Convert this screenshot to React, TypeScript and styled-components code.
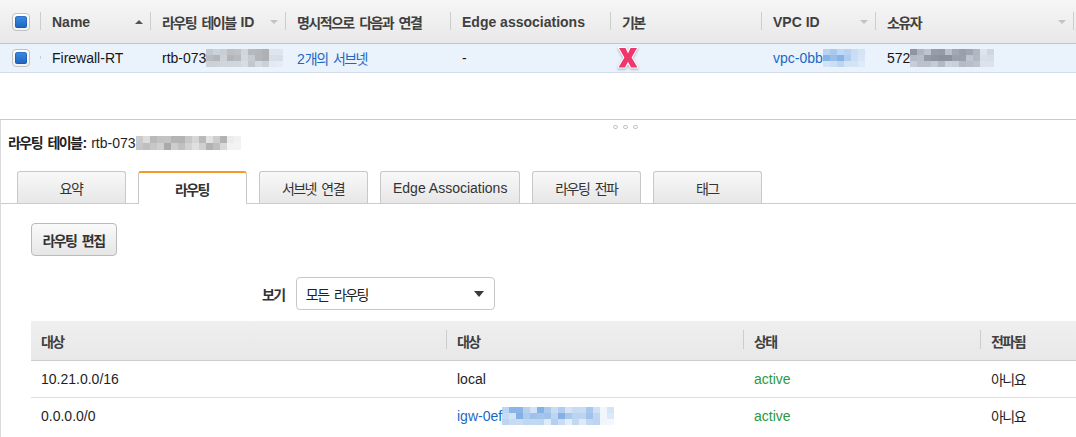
import React from "react";
import styled, { createGlobalStyle } from "styled-components";

const GlobalStyle = createGlobalStyle`
  html, body {
    margin: 0;
    padding: 0;
    background: #fff;
  }
  body {
    font-family: "Liberation Sans", "Noto Sans CJK KR", sans-serif;
    font-size: 14px;
    color: #1e1e1e;
    width: 1076px;
    height: 437px;
    overflow: hidden;
  }
  * {
    box-sizing: border-box;
  }
`;

// hangul in the source is narrower than Noto's full-width glyphs
const Ko = styled.span`
  letter-spacing: -0.11em;
  word-spacing: 0.22em;
  margin-right: 0.08em;
`;

const TOP_COLS = "41px 110px 135px 165px 160px 151px 114px 198px 1fr";

const TopTable = styled.div`
  height: 120px;
  border-bottom: 1px solid #cacaca;
  overflow: hidden;
`;

const HeadRow = styled.div`
  display: grid;
  grid-template-columns: ${TOP_COLS};
  height: 44px;
  background: linear-gradient(#f6f6f6, #e8e8e8);
  border-bottom: 1px solid #c6c6c6;
`;

const HeadCell = styled.div`
  position: relative;
  display: flex;
  align-items: center;
  padding: 0 8px 0 11px;
  font-weight: bold;
  color: #404040;
  white-space: pre;
  &::after {
    content: "";
    position: absolute;
    right: 0;
    top: 12px;
    bottom: 13px;
    width: 1px;
    background: #cdcdcd;
  }
`;

const CheckCell = styled.div`
  position: relative;
  display: flex;
  align-items: center;
  padding-left: 12px;
  &::after {
    content: "";
    position: absolute;
    right: 0;
    top: 12px;
    bottom: 13px;
    width: 1px;
    background: #cdcdcd;
  }
`;

const SortArrow = styled.span<{ $up?: boolean }>`
  margin-left: auto;
  width: 0;
  height: 0;
  border-left: 4px solid transparent;
  border-right: 4px solid transparent;
  ${(p) =>
    p.$up
      ? "border-bottom: 4px solid #555;"
      : "border-top: 4px solid #c2c2c2;"}
`;

const Checkbox = styled.span`
  display: flex;
  align-items: center;
  justify-content: center;
  width: 18px;
  height: 18px;
  border: 1px solid #c2c2c2;
  border-radius: 4px;
  background: linear-gradient(#ffffff, #f1f1f1);
  &::before {
    content: "";
    width: 12px;
    height: 12px;
    border-radius: 2.5px;
    background: linear-gradient(#3d8ce2, #1f62c0);
    box-shadow: inset 0 0 0 1px rgba(20, 70, 150, 0.35);
  }
`;

const DataRow = styled.div`
  display: grid;
  grid-template-columns: ${TOP_COLS};
  height: 29px;
  background: #eaf2fc;
  border-bottom: 1px solid #d3dce8;
`;

const DataCell = styled.div`
  display: flex;
  align-items: center;
  padding-left: 11px;
  white-space: pre;
  overflow: hidden;
  color: #161616;
`;

const LinkText = styled.span`
  color: #1b69c4;
`;

const XSvg = styled.svg`
  margin-left: -6px;
  filter: drop-shadow(0 1px 1px rgba(0, 0, 0, 0.3));
`;

const PixelGrid = styled.span<{ $cols: number; $w: number; $h: number }>`
  display: inline-grid;
  grid-template-columns: repeat(${(p) => p.$cols}, ${(p) => p.$w}px);
  grid-auto-rows: ${(p) => p.$h}px;
  vertical-align: middle;
`;

const Pixel = styled.span``;

type Tone = "grey" | "dark" | "blue";
const TONES: Record<Tone, [number, number, number]> = {
  grey: [140, 140, 140],
  dark: [105, 112, 124],
  blue: [90, 150, 220],
};

function Redacted({
  cols,
  rows,
  tone,
  seed,
  w = 7,
  h = 6,
}: {
  cols: number;
  rows: number;
  tone: Tone;
  seed: number;
  w?: number;
  h?: number;
}) {
  const [r, g, b] = TONES[tone];
  const cells = [];
  for (let y = 0; y < rows; y++) {
    for (let x = 0; x < cols; x++) {
      const n = Math.sin((x + 1) * 12.9898 + (y + 1) * 78.233 + seed * 3.7) * 43758.5453;
      let a = 0.25 + 0.5 * (n - Math.floor(n));
      if (x >= cols - 2) a *= 0.35;
      if (y === rows - 1 && rows > 2) a *= 0.6;
      cells.push(
        <Pixel key={`${x}-${y}`} style={{ background: `rgba(${r},${g},${b},${a.toFixed(2)})` }} />
      );
    }
  }
  return (
    <PixelGrid $cols={cols} $w={w} $h={h}>
      {cells}
    </PixelGrid>
  );
}

const Detail = styled.div`
  height: 317px;
  border-left: 1px solid #d9d9d9;
`;

const Grip = styled.div`
  display: flex;
  gap: 5px;
  height: 14px;
  padding: 5px 0 0 612px;
`;

const GripDot = styled.span`
  width: 5px;
  height: 4px;
  border: 1px solid #c4c4c4;
  border-radius: 2px;
`;

const PanelTitle = styled.div`
  height: 18px;
  line-height: 18px;
  padding-left: 7px;
  display: flex;
  align-items: center;
  white-space: pre;
`;

const TitleLabel = styled.b`
  color: #222;
`;

const TabBar = styled.div`
  display: flex;
  align-items: flex-end;
  gap: 12px;
  height: 33px;
  margin-top: 19px;
  padding-left: 16px;
  border-bottom: 1px solid #cbcbcb;
`;

const Tab = styled.div<{ $active?: boolean }>`
  display: flex;
  align-items: center;
  justify-content: center;
  min-width: 109px;
  padding: 0 12px;
  border: 1px solid #c8c8c8;
  border-bottom: none;
  border-radius: 3px 3px 0 0;
  white-space: nowrap;
  color: #333;
  height: ${(p) => (p.$active ? "33px" : "32px")};
  margin-bottom: ${(p) => (p.$active ? "-1px" : "0")};
  background: ${(p) => (p.$active ? "#fff" : "linear-gradient(#f8f8f8, #e7e7e7)")};
  font-weight: ${(p) => (p.$active ? "bold" : "normal")};
  border-top: ${(p) => (p.$active ? "2px solid #f39a27" : "1px solid #c8c8c8")};
`;

const Body = styled.div`
  padding: 19px 0 0 30px;
`;

const EditButton = styled.button`
  display: flex;
  align-items: center;
  justify-content: center;
  width: 86px;
  height: 33px;
  padding: 0;
  border: 1px solid #bababa;
  border-radius: 4px;
  background: linear-gradient(#fafafa, #e6e6e6);
  font-family: inherit;
  font-size: 14px;
  font-weight: bold;
  color: #333;
`;

const FilterRow = styled.div`
  display: flex;
  align-items: center;
  gap: 10px;
  margin: 21px 0 0 231px;
`;

const FilterLabel = styled.b`
  color: #333;
`;

const SelectBox = styled.div`
  display: flex;
  align-items: center;
  width: 199px;
  height: 33px;
  padding: 0 10px 0 9px;
  border: 1px solid #c8c8c8;
  border-radius: 4px;
  background: #fff;
  color: #222;
`;

const Caret = styled.span`
  margin-left: auto;
  width: 0;
  height: 0;
  border-left: 5px solid transparent;
  border-right: 5px solid transparent;
  border-top: 6px solid #3a3a3a;
`;

const ROUTE_COLS = "415px 297px 237px 1fr";

const RouteTable = styled.div`
  margin-top: 11px;
`;

const RouteHead = styled.div`
  display: grid;
  grid-template-columns: ${ROUTE_COLS};
  height: 40px;
  background: linear-gradient(#efefef, #e8e8e8);
  border-bottom: 1px solid #cdcdcd;
`;

const RouteHeadCell = styled.div<{ $sep?: boolean }>`
  position: relative;
  display: flex;
  align-items: center;
  padding-left: ${(p) => (p.$sep ? "11px" : "10px")};
  font-weight: bold;
  color: #404040;
  &::before {
    content: "";
    display: ${(p) => (p.$sep ? "block" : "none")};
    position: absolute;
    left: 0;
    top: 9px;
    bottom: 11px;
    width: 1px;
    background: #cdcdcd;
  }
`;

const RouteRow = styled.div<{ $last?: boolean }>`
  display: grid;
  grid-template-columns: ${ROUTE_COLS};
  height: 37px;
  border-bottom: 1px solid ${(p) => (p.$last ? "transparent" : "#dedede")};
`;

const RouteCell = styled.div<{ $first?: boolean }>`
  display: flex;
  align-items: center;
  padding-left: ${(p) => (p.$first ? "10px" : "11px")};
  white-space: pre;
  overflow: hidden;
  color: #1e1e1e;
`;

const Status = styled.span`
  color: #2a9a3c;
`;

const TOP_HEADERS: { label: React.ReactNode; arrow?: "up" | "down" }[] = [
  { label: "Name", arrow: "up" },
  { label: <><Ko>라우팅 테이블</Ko> ID</>, arrow: "down" },
  { label: <Ko>명시적으로 다음과 연결</Ko> },
  { label: "Edge associations" },
  { label: <Ko>기본</Ko> },
  { label: "VPC ID", arrow: "down" },
  { label: <Ko>소유자</Ko>, arrow: "down" },
];

const TABS = [
  { label: <Ko>요약</Ko> },
  { label: <Ko>라우팅</Ko>, active: true },
  { label: <Ko>서브넷 연결</Ko> },
  { label: "Edge Associations" },
  { label: <Ko>라우팅 전파</Ko> },
  { label: <Ko>태그</Ko> },
];

function XMark() {
  return (
    <XSvg width="24" height="24" viewBox="0 0 24 24">
      <polygon
        points="3,2 9.5,2 12,7.5 14.5,2 21,2 15.6,11.5 21.5,21.5 15,21.5 12,15.8 9,21.5 2.5,21.5 8.4,11.5"
        fill="#f0376c"
        stroke="#fff"
        strokeWidth="2.2"
        strokeLinejoin="round"
        paintOrder="stroke"
      />
    </XSvg>
  );
}

export default function App() {
  return (
    <>
      <GlobalStyle />
      <TopTable>
        <HeadRow>
          <CheckCell>
            <Checkbox />
          </CheckCell>
          {TOP_HEADERS.map((h, i) => (
            <HeadCell key={i}>
              {h.label}
              {h.arrow && <SortArrow $up={h.arrow === "up"} />}
            </HeadCell>
          ))}
          <HeadCell />
        </HeadRow>
        <DataRow>
          <CheckCell>
            <Checkbox />
          </CheckCell>
          <DataCell>Firewall-RT</DataCell>
          <DataCell>
            rtb-073
            <Redacted cols={11} rows={3} tone="grey" seed={1} />
          </DataCell>
          <DataCell>
            <LinkText>
              2<Ko>개의 서브넷</Ko>
            </LinkText>
          </DataCell>
          <DataCell>-</DataCell>
          <DataCell>
            <XMark />
          </DataCell>
          <DataCell>
            <LinkText>vpc-0bb</LinkText>
            <Redacted cols={6} rows={3} tone="blue" seed={2} />
          </DataCell>
          <DataCell>
            572
            <Redacted cols={12} rows={3} tone="dark" seed={3} />
          </DataCell>
          <DataCell />
        </DataRow>
      </TopTable>

      <Detail>
        <Grip>
          <GripDot />
          <GripDot />
          <GripDot />
        </Grip>
        <PanelTitle>
          <TitleLabel>
            <Ko>라우팅 테이블</Ko>:{" "}
          </TitleLabel>
          rtb-073
          <Redacted cols={15} rows={2} tone="grey" seed={4} h={7} />
        </PanelTitle>

        <TabBar>
          {TABS.map((t, i) => (
            <Tab key={i} $active={t.active}>
              {t.label}
            </Tab>
          ))}
        </TabBar>

        <Body>
          <EditButton>
            <Ko>라우팅 편집</Ko>
          </EditButton>

          <FilterRow>
            <FilterLabel>
              <Ko>보기</Ko>
            </FilterLabel>
            <SelectBox>
              <Ko>모든 라우팅</Ko>
              <Caret />
            </SelectBox>
          </FilterRow>

          <RouteTable>
            <RouteHead>
              <RouteHeadCell>
                <Ko>대상</Ko>
              </RouteHeadCell>
              <RouteHeadCell $sep>
                <Ko>대상</Ko>
              </RouteHeadCell>
              <RouteHeadCell $sep>
                <Ko>상태</Ko>
              </RouteHeadCell>
              <RouteHeadCell $sep>
                <Ko>전파됨</Ko>
              </RouteHeadCell>
            </RouteHead>
            <RouteRow>
              <RouteCell $first>10.21.0.0/16</RouteCell>
              <RouteCell>local</RouteCell>
              <RouteCell>
                <Status>active</Status>
              </RouteCell>
              <RouteCell>
                <Ko>아니요</Ko>
              </RouteCell>
            </RouteRow>
            <RouteRow $last>
              <RouteCell $first>0.0.0.0/0</RouteCell>
              <RouteCell>
                <LinkText>igw-0ef</LinkText>
                <Redacted cols={16} rows={3} tone="blue" seed={5} />
              </RouteCell>
              <RouteCell>
                <Status>active</Status>
              </RouteCell>
              <RouteCell>
                <Ko>아니요</Ko>
              </RouteCell>
            </RouteRow>
          </RouteTable>
        </Body>
      </Detail>
    </>
  );
}
